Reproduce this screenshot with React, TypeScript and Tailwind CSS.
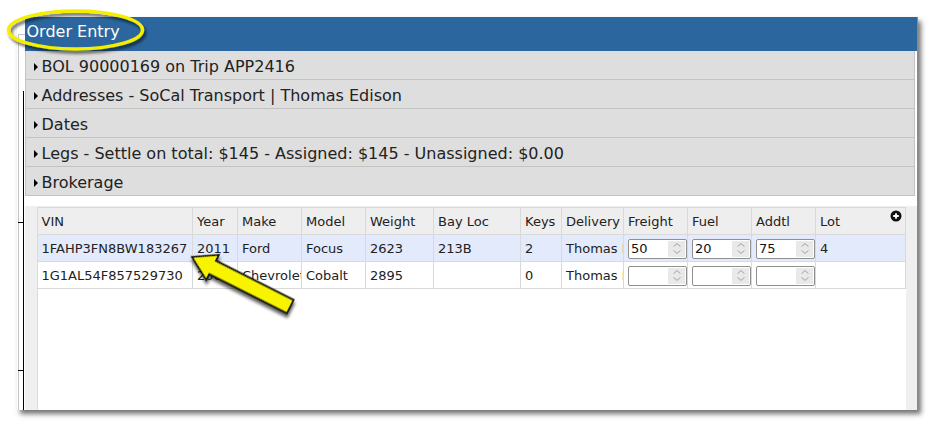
import React from "react";

const sections = [
  "BOL 90000169 on Trip APP2416",
  "Addresses - SoCal Transport | Thomas Edison",
  "Dates",
  "Legs - Settle on total: $145 - Assigned: $145 - Unassigned: $0.00",
  "Brokerage",
];

const columns = [
  { label: "VIN", cls: "w-[155px]" },
  { label: "Year", cls: "w-[45px]" },
  { label: "Make", cls: "w-[64px]" },
  { label: "Model", cls: "w-[64px]" },
  { label: "Weight", cls: "w-[68px]" },
  { label: "Bay Loc", cls: "w-[87px]" },
  { label: "Keys", cls: "w-[41px]" },
  { label: "Delivery", cls: "w-[62px]" },
  { label: "Freight", cls: "w-[64px]" },
  { label: "Fuel", cls: "w-[64px]" },
  { label: "Addtl", cls: "w-[64px]" },
  { label: "Lot", cls: "w-[90px]" },
];

type Vehicle = {
  vin: string;
  year: string;
  make: string;
  model: string;
  weight: string;
  bay: string;
  keys: string;
  delivery: string;
  freight: string;
  fuel: string;
  addtl: string;
  lot: string;
};

const vehicles: Vehicle[] = [
  {
    vin: "1FAHP3FN8BW183267",
    year: "2011",
    make: "Ford",
    model: "Focus",
    weight: "2623",
    bay: "213B",
    keys: "2",
    delivery: "Thomas Edison",
    freight: "50",
    fuel: "20",
    addtl: "75",
    lot: "4",
  },
  {
    vin: "1G1AL54F857529730",
    year: "2005",
    make: "Chevrolet",
    model: "Cobalt",
    weight: "2895",
    bay: "",
    keys: "0",
    delivery: "Thomas Edison",
    freight: "",
    fuel: "",
    addtl: "",
    lot: "",
  },
];

function Spinner({ value }: { value: string }) {
  return (
    <div className="flex items-center w-[59px] h-[20px] border border-[#8f8f8f] rounded-[2px] bg-white">
      <span className="flex-1 pl-[2px] text-[13px] leading-none text-[#111]">{value}</span>
      <div className="flex flex-col items-center justify-center gap-[3px] w-[17px] h-[16px] mr-[1px] bg-[#e9e9e9]">
        <svg width="8" height="4" viewBox="0 0 8 4">
          <path d="M0.5 3.6 L4 0.6 L7.5 3.6" fill="none" stroke="#a0a0a0" strokeWidth="1" />
        </svg>
        <svg width="8" height="4" viewBox="0 0 8 4">
          <path d="M0.5 0.4 L4 3.4 L7.5 0.4" fill="none" stroke="#a0a0a0" strokeWidth="1" />
        </svg>
      </div>
    </div>
  );
}

const cell = "h-[27px] pl-[4px] pr-0 pt-[1px] border-r border-b border-[#d9d9d9] overflow-hidden whitespace-nowrap text-left";

export default function App() {
  return (
    <div className="relative w-[933px] h-[428px] bg-white overflow-hidden font-['DejaVu_Sans',Verdana,sans-serif] text-[#222]">
      <div className="pl-[17px] pt-[17px]">
        <div className="flex w-[901px] h-[393px] shadow-[3px_4px_5px_rgba(0,0,0,0.55)]">
          {/* left frame edge */}
          <div className="relative w-[8px] bg-white">
            <div className="absolute left-[1px] top-[17px] bottom-0 w-[7px] border-l border-t border-[#c4c4c4]" />
            <div className="absolute left-[6px] top-[74px] bottom-0 w-[1px] bg-black" />
            <div className="absolute left-[1px] top-[205px] w-[6px] h-[1px] bg-black" />
            <div className="absolute left-[1px] top-[353px] w-[6px] h-[1px] bg-black" />
          </div>

          <div className="flex-1 flex flex-col bg-white border-r border-[#8a8a8a]">
            <div className="h-[34px] bg-[#2b679e] pl-[2px] pt-[5px] text-[16px] leading-[20px] text-white">
              Order Entry
            </div>

            <div className="mr-[2px]">
              {sections.map((s) => (
                <div
                  key={s}
                  className="flex items-center h-[29px] pl-[8px] pt-[3px] bg-[#dedede] border-l border-r border-b border-[#c2c2c2] text-[16px] leading-[20px]"
                >
                  <span className="w-0 h-0 border-y-[4px] border-y-transparent border-l-[4px] border-l-black mr-[4px]" />
                  {s}
                </div>
              ))}
            </div>

            <div className="h-[10px]" />

            <div className="flex-1 flex bg-[#efefef] pl-[12px] pr-[11px] pt-[1px]">
              <div className="flex-1 bg-white border-l border-[#dcdcdc]">
                <table className="table-fixed border-collapse w-[868px] text-[13px]">
                  <colgroup>
                    {columns.map((c) => (
                      <col key={c.label} className={c.cls} />
                    ))}
                  </colgroup>
                  <thead>
                    <tr className="bg-[#eeeeee]">
                      {columns.map((c, i) => (
                        <th
                          key={c.label}
                          className={`${cell} h-[26px] border-t font-normal ${i === columns.length - 1 ? "relative" : ""}`}
                        >
                          {c.label}
                          {i === columns.length - 1 && (
                            <svg className="absolute right-[3px] top-[2px]" width="12" height="12" viewBox="0 0 12 12">
                              <circle cx="6" cy="6" r="5.5" fill="#111" />
                              <path d="M6 3.2 V8.8 M3.2 6 H8.8" stroke="white" strokeWidth="1.8" />
                            </svg>
                          )}
                        </th>
                      ))}
                    </tr>
                  </thead>
                  <tbody>
                    {vehicles.map((v, r) => (
                      <tr key={v.vin} className={r === 0 ? "bg-[#e3eafb]" : "bg-white"}>
                        <td className={cell}>{v.vin}</td>
                        <td className={cell}>{v.year}</td>
                        <td className={cell}>{v.make}</td>
                        <td className={cell}>{v.model}</td>
                        <td className={cell}>{v.weight}</td>
                        <td className={cell}>{v.bay}</td>
                        <td className={cell}>{v.keys}</td>
                        <td className={`${cell} text-clip`}>{v.delivery}</td>
                        <td className={`${cell} pl-[3px] pt-0`}>
                          <Spinner value={v.freight} />
                        </td>
                        <td className={`${cell} pl-[3px] pt-0`}>
                          <Spinner value={v.fuel} />
                        </td>
                        <td className={`${cell} pl-[3px] pt-0`}>
                          <Spinner value={v.addtl} />
                        </td>
                        <td className={cell}>{v.lot}</td>
                      </tr>
                    ))}
                  </tbody>
                </table>
              </div>
            </div>
          </div>
        </div>
      </div>

      {/* callout ring and pointer */}
      <svg className="absolute inset-0 pointer-events-none" width="933" height="428" viewBox="0 0 933 428">
        <defs>
          <filter id="callout-shadow" x="-20%" y="-20%" width="140%" height="160%">
            <feDropShadow dx="2" dy="3" stdDeviation="1.6" floodColor="#000" floodOpacity="0.6" />
          </filter>
        </defs>
        <ellipse
          cx="75.5"
          cy="30"
          rx="67"
          ry="19"
          fill="none"
          stroke="#f4ef00"
          strokeWidth="3.5"
          filter="url(#callout-shadow)"
        />
        <g transform="translate(192 257) rotate(26.8)" filter="url(#callout-shadow)">
          <polygon
            points="0,0 23,-14 23,-7.5 110,-7.5 110,7.5 23,7.5 23,14"
            fill="#f8f400"
            stroke="#111"
            strokeWidth="1.8"
            strokeLinejoin="miter"
          />
        </g>
      </svg>
    </div>
  );
}
